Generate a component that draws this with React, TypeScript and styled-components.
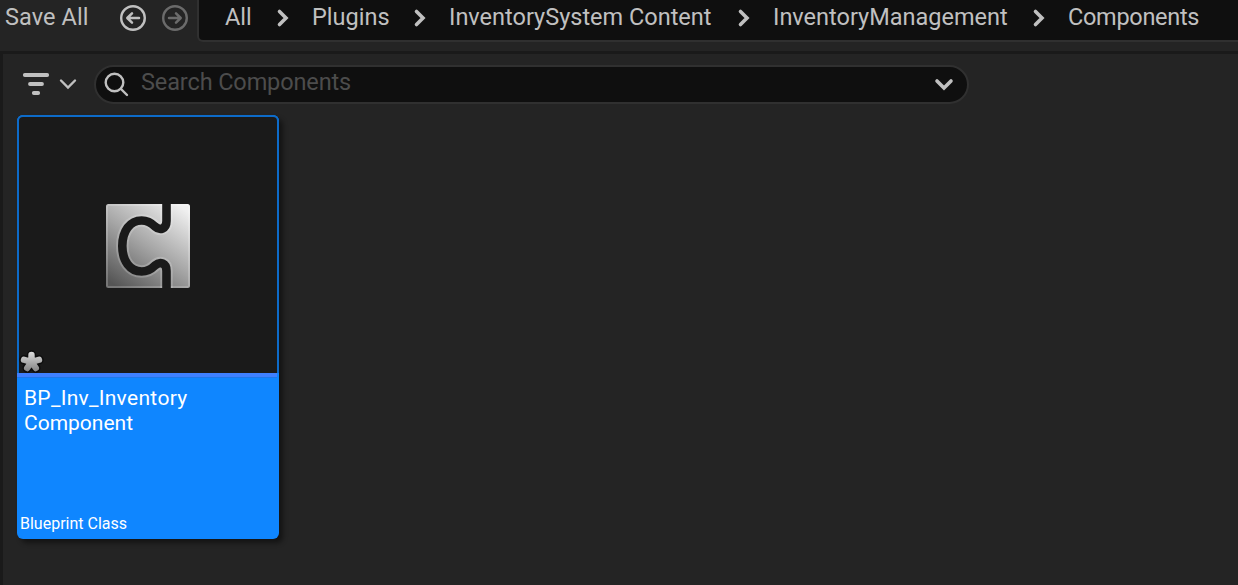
import React from 'react';
import styled, { createGlobalStyle } from 'styled-components';

const colors = {
  panel: '#242424',
  recessed: '#0f0f0f',
  divider: '#1a1a1a',
  outline: '#303030',
  text: '#c0c0c0',
  textMuted: '#4c4c4c',
  select: '#0f86ff',
  selectOutline: '#0d6bc9',
  assetType: '#3f80ff',
};

const GlobalStyle = createGlobalStyle`
  * {
    box-sizing: border-box;
  }

  body {
    margin: 0;
    background: ${colors.panel};
    font-family: Roboto, 'Liberation Sans', sans-serif;
    overflow: hidden;
  }
`;

const Browser = styled.div`
  display: flex;
  flex-direction: column;
  width: 1238px;
  height: 585px;
  background: ${colors.panel};
  color: ${colors.text};
`;

const Toolbar = styled.header`
  display: flex;
  align-items: flex-start;
  height: 54px;
  border-bottom: 3px solid ${colors.divider};
`;

const ToolbarActions = styled.div`
  display: flex;
  align-items: center;
  width: 197px;
  height: 35px;
  padding-left: 5px;
`;

const SaveButton = styled.span`
  flex: none;
  width: 114px;
  margin-top: -2px;
  font-size: 23.5px;
  line-height: 28px;
  letter-spacing: 0.1px;
  white-space: nowrap;
`;

const NavButton = styled.span<{ $disabled?: boolean }>`
  flex: none;
  width: 42px;
  height: 28px;
  margin-top: 1px;
  color: ${({ $disabled }) => ($disabled ? '#6b6b6b' : colors.text)};

  svg {
    display: block;
  }
`;

const Breadcrumbs = styled.nav`
  display: flex;
  flex: 1;
  height: 42px;
  padding: 3px 0 0 26px;
  background: ${colors.recessed};
  border-left: 2px solid ${colors.outline};
  border-bottom: 2px solid ${colors.outline};
  border-bottom-left-radius: 6px;
`;

const Crumb = styled.span<{ $width: number; $spacing?: number }>`
  flex: none;
  width: ${({ $width }) => $width}px;
  font-size: 23.5px;
  line-height: 29px;
  letter-spacing: ${({ $spacing = 0 }) => $spacing}px;
  white-space: nowrap;
`;

const CrumbArrow = styled.svg`
  flex: none;
  width: 14px;
  height: 20px;
  margin: 5px 22.5px 0 23.5px;
`;

const Content = styled.main`
  flex: 1;
  padding: 11px 0 0 14px;
  border-left: 3px solid ${colors.divider};
`;

const FilterRow = styled.div`
  display: flex;
  align-items: center;
  height: 39px;
`;

const FilterButton = styled.span`
  display: flex;
  align-items: center;
  gap: 9px;
  width: 77px;
  padding: 0 0 2px 5px;
`;

const SearchBox = styled.label`
  display: flex;
  align-items: center;
  width: 875px;
  height: 39px;
  padding: 0 13px 0 8px;
  background: ${colors.recessed};
  border: 2px solid ${colors.outline};
  border-radius: 20px;
`;

const SearchInput = styled.input`
  flex: 1;
  height: 30px;
  margin: -6px 0 0 12px;
  padding: 0;
  background: none;
  border: none;
  outline: none;
  color: ${colors.text};
  font-family: inherit;
  font-size: 23.5px;
  letter-spacing: -0.12px;

  &::placeholder {
    color: ${colors.textMuted};
    opacity: 1;
  }
`;

const AssetTile = styled.article`
  display: flex;
  flex-direction: column;
  width: 262px;
  height: 424px;
  margin-top: 11px;
  background: ${colors.select};
  border-radius: 6px;
  box-shadow: 4px 4px 5px rgba(0, 0, 0, 0.45);
`;

const Thumbnail = styled.div`
  position: relative;
  display: flex;
  align-items: center;
  justify-content: center;
  height: 258px;
  padding-top: 2px;
  background: ${colors.divider};
  border: 2px solid ${colors.selectOutline};
  border-bottom: none;
  border-radius: 6px 6px 0 0;
`;

const DirtyMark = styled.svg`
  position: absolute;
  left: 0;
  bottom: 0;
  width: 26px;
  height: 25px;
`;

const TypeStrip = styled.div`
  flex: none;
  height: 5px;
  margin: 0 2px 0 0;
  background: ${colors.assetType};
  border-bottom: 1px solid #1f78e8;
`;

const AssetInfo = styled.div`
  display: flex;
  flex: 1;
  flex-direction: column;
  justify-content: space-between;
  padding: 8px 3px 5px;
  color: #fff;
`;

const AssetName = styled.div`
  padding-left: 4px;
  font-size: 21px;
  line-height: 25px;
  font-kerning: none;

  &::first-line {
    letter-spacing: 0.28px;
  }
`;

const AssetClass = styled.div`
  font-size: 16px;
  line-height: 20px;
`;

const crumbs = [
  { label: 'All', width: 27 },
  { label: 'Plugins', width: 77 },
  { label: 'InventorySystem Content', width: 264 },
  { label: 'InventoryManagement', width: 235 },
  { label: 'Components', width: 132, spacing: -0.3 },
];

const ArrowCircle: React.FC<{ forward?: boolean }> = ({ forward }) => (
  <svg width="28" height="28" viewBox="0 0 28 28" fill="none" stroke="currentColor">
    <circle cx="14" cy="14" r="11.8" strokeWidth="2.4" />
    <path
      d={forward ? 'M8 14H19.5M15 9.3L19.7 14L15 18.7' : 'M20 14H8.5M13 9.3L8.3 14L13 18.7'}
      strokeWidth="2.5"
      strokeLinecap="round"
      strokeLinejoin="round"
    />
  </svg>
);

const puzzlePath =
  'M60.5 -2V17C60.5 25 54 27 49 22.5C46 19.5 42 16.5 35.7 16.5C24 16.5 16.3 27 16.3 42C16.3 57 24 67.5 35.7 67.5C42 67.5 46 64.5 49 61.5C54 57 60.5 59 60.5 67V86';

const BlueprintIcon: React.FC = () => (
  <svg width="84" height="84" viewBox="0 0 84 84" fill="none">
    <defs>
      <linearGradient id="metal" x1="0.15" y1="1" x2="0.85" y2="0">
        <stop offset="0" stopColor="#555" />
        <stop offset="0.5" stopColor="#a6a6a6" />
        <stop offset="1" stopColor="#f0f0f0" />
      </linearGradient>
      <clipPath id="plate">
        <rect width="84" height="84" rx="2.5" />
      </clipPath>
    </defs>
    <g clipPath="url(#plate)">
      <rect width="84" height="84" fill="url(#metal)" />
      <rect width="84" height="84" rx="2.5" stroke="#fff" strokeOpacity="0.2" strokeWidth="4" />
      <path d={puzzlePath} stroke="#fff" strokeOpacity="0.2" strokeWidth="12.5" />
      <path d={puzzlePath} stroke={colors.divider} strokeWidth="8.6" />
    </g>
  </svg>
);

const starPath = 'M12.5 14V7M12.5 14L5 11.8M12.5 14L20 11.8M12.5 14L8.2 20M12.5 14L16.8 20';

const App: React.FC = () => {
  return (
    <>
      <GlobalStyle />
      <Browser>
        <Toolbar>
          <ToolbarActions>
            <SaveButton>Save All</SaveButton>
            <NavButton>
              <ArrowCircle />
            </NavButton>
            <NavButton $disabled>
              <ArrowCircle forward />
            </NavButton>
          </ToolbarActions>
          <Breadcrumbs>
            {crumbs.map(({ label, width, spacing }, index) => (
              <React.Fragment key={label}>
                {index > 0 && (
                  <CrumbArrow viewBox="0 0 14 20" fill="none" stroke={colors.text}>
                    <path d="M3.5 3.5L10 10L3.5 16.5" strokeWidth="3.6" strokeLinecap="round" />
                  </CrumbArrow>
                )}
                <Crumb $width={width} $spacing={spacing}>{label}</Crumb>
              </React.Fragment>
            ))}
          </Breadcrumbs>
        </Toolbar>

        <Content>
          <FilterRow>
            <FilterButton>
              <svg width="28" height="24" viewBox="0 0 28 24" stroke={colors.text} strokeWidth="3.8" strokeLinecap="round">
                <path d="M2.8 3H25.2M8 12H20M11.8 21H16.2" />
              </svg>
              <svg width="18" height="14" viewBox="0 0 18 14" fill="none" stroke={colors.text} strokeWidth="2.4" strokeLinecap="round">
                <path d="M2 3.5L9 10.5L16 3.5" />
              </svg>
            </FilterButton>
            <SearchBox>
              <svg width="25" height="25" viewBox="0 0 25 25" fill="none" stroke={colors.text} strokeWidth="2.4" strokeLinecap="round">
                <circle cx="10.5" cy="10.5" r="8.8" />
                <path d="M17 17L23 23" />
              </svg>
              <SearchInput placeholder="Search Components" />
              <svg width="20" height="14" viewBox="0 0 20 14" fill="none" stroke={colors.text} strokeWidth="3.6" strokeLinecap="round">
                <path d="M3 2.9L10 9.9L17 2.9" />
              </svg>
            </SearchBox>
          </FilterRow>

          <AssetTile>
            <Thumbnail>
              <BlueprintIcon />
              <DirtyMark viewBox="0 0 26 25">
                <defs>
                  <linearGradient id="star" x1="0" y1="0" x2="0" y2="25" gradientUnits="userSpaceOnUse">
                    <stop offset="0.15" stopColor="#dcdcdc" />
                    <stop offset="0.85" stopColor="#8c8c8c" />
                  </linearGradient>
                </defs>
                <path d={starPath} stroke="#0c0c0c" strokeWidth="9.4" strokeLinecap="round" />
                <path d={starPath} stroke="url(#star)" strokeWidth="6.4" strokeLinecap="round" />
              </DirtyMark>
            </Thumbnail>
            <TypeStrip />
            <AssetInfo>
              <AssetName>
                BP_Inv_Inventory
                <br />
                Component
              </AssetName>
              <AssetClass>Blueprint Class</AssetClass>
            </AssetInfo>
          </AssetTile>
        </Content>
      </Browser>
    </>
  );
};

export default App;
